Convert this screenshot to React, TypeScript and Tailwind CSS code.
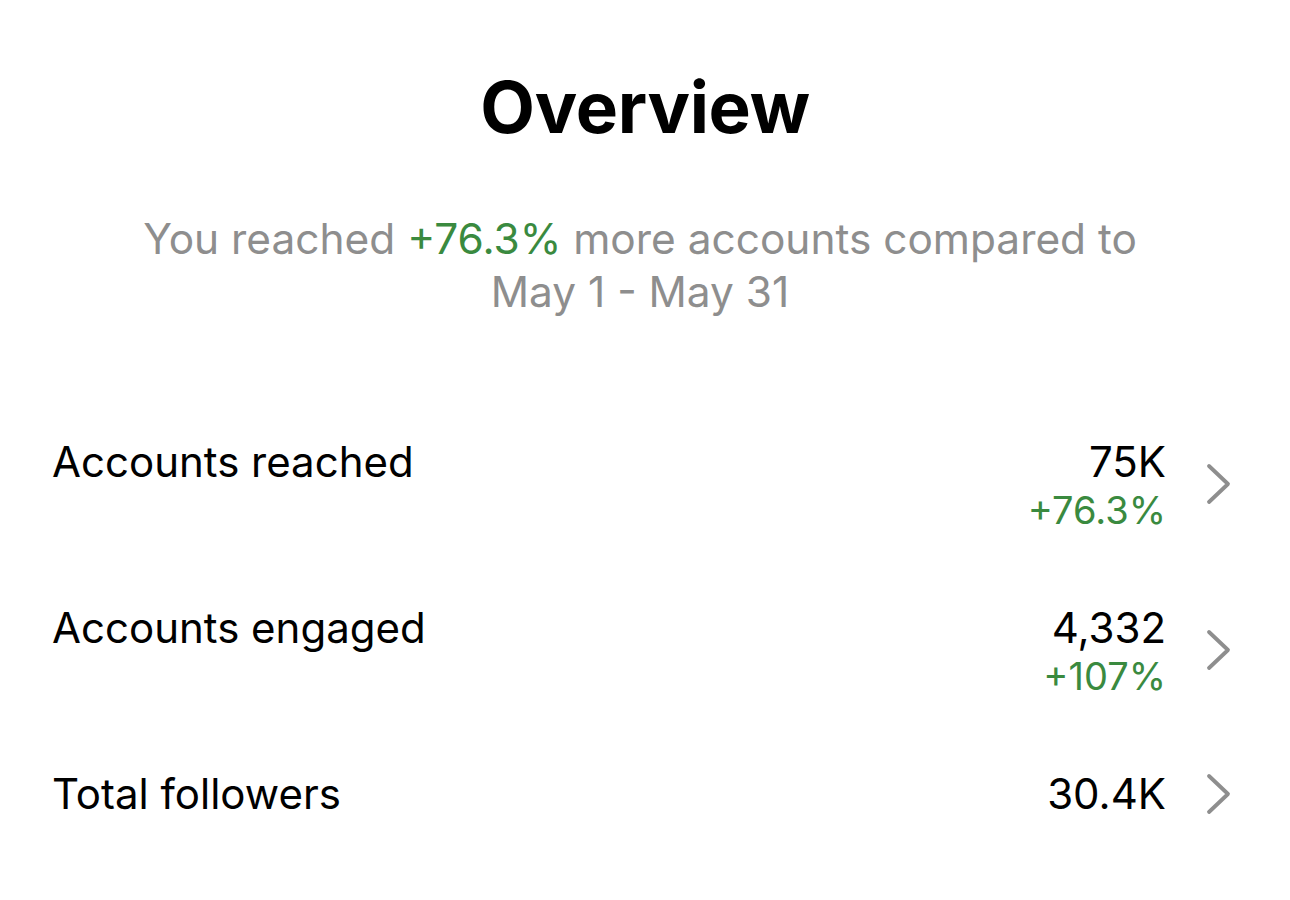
const rows = [
  { label: "Accounts reached", value: "75K", change: "+76.3%" },
  { label: "Accounts engaged", value: "4,332", change: "+107%" },
  { label: "Total followers", value: "30.4K", change: null },
];

function Chevron() {
  return (
    <svg width="26" height="42" viewBox="0 0 26 42" fill="none" className="shrink-0">
      <polyline points="3,3 22,21 3,39" stroke="#8e8e8e" strokeWidth="3.8" strokeLinecap="round" strokeLinejoin="round" />
    </svg>
  );
}

export default function App() {
  return (
    <div className="w-[1290px] h-[900px] bg-white text-black font-['Inter',sans-serif]">
      <h1 className="pt-[64px] text-center text-[71px] font-bold leading-[86px] tracking-[-0.3px]">Overview</h1>
      <p className="mt-[62px] pl-[115px] pr-[125px] text-center text-[42.4px] leading-[53px] text-[#8e8e8e]">
        You reached <span className="text-[#3a8a3f]">+76.3%</span> more accounts compared to
        <br />
        May 1 - May 31
      </p>

      <div className="mt-[118px] flex flex-col pl-[52px] pr-[58px]">
        {rows.map((r) => (
          <div key={r.label} className="flex items-start justify-between h-[166px]">
            <span className="text-[42px] leading-[52px]">{r.label}</span>
            <div className="flex items-center gap-[40px]">
              <div className="flex flex-col items-end">
                <span className="text-[42px] leading-[52px]">{r.value}</span>
                {r.change && <span className="text-[38px] leading-[44px] text-[#3a8a3f]">{r.change}</span>}
              </div>
              <Chevron />
            </div>
          </div>
        ))}
      </div>
    </div>
  );
}
